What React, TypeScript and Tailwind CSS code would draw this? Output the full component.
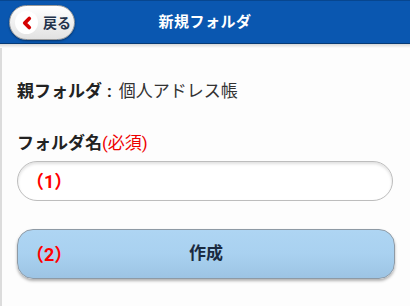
import { ChevronLeft } from "lucide-react"

const font = { fontFamily: '"Roboto", "Noto Sans CJK JP", sans-serif' }

export default function App() {
  return (
    <div className="w-[410px] h-[306px] overflow-hidden bg-[#fdfdfd]" style={font}>
      <header className="relative h-[44px] bg-[#0a57b0] border-t border-[#07468f] border-b border-b-[#073a75] flex items-center justify-center">
        <button className="absolute left-[9px] top-[4px] h-[35px] w-[66px] rounded-full border border-[#9a9a9a] bg-gradient-to-b from-white to-[#e2e2e2] shadow-[0_1px_2px_rgba(0,0,0,0.4)] flex items-center pl-[5px] gap-[5px]">
          <span className="w-[23px] h-[23px] rounded-full bg-white flex items-center justify-center">
            <ChevronLeft className="w-[18px] h-[18px] text-[#d40000]" strokeWidth={5} />
          </span>
          <span className="text-[14px] font-bold text-[#22324a] leading-none">戻る</span>
        </button>
        <h1 className="text-white text-[15px] font-bold tracking-[0.5px]">新規フォルダ</h1>
      </header>
      <div className="h-[4px] bg-gradient-to-b from-[#d8d8d8] to-[#fdfdfd]" />
      <main className="border-l-2 border-[#dcdcdc] h-[262px] pl-[15px] pr-[15px]">
        <p className="pt-[31px] text-[17px] leading-[24px] text-[#222]">
          <span className="font-bold">親フォルダ</span>
          <span className="font-bold ml-[5px] mr-[7px]">:</span>
          <span className="text-[#333]">個人アドレス帳</span>
        </p>
        <p className="mt-[28px] text-[17px] leading-[24px] font-bold text-[#222]">
          フォルダ名<span className="font-normal text-[#ee0000]">(必須)</span>
        </p>
        <div className="mt-[6px] w-[376px] h-[40px] rounded-[20px] border border-[#bdbdbd] bg-white shadow-[inset_0_2px_3px_rgba(0,0,0,0.12)] flex items-center pl-[8px]">
          <span className="text-[18px] font-bold text-[#ff0000]">（1）</span>
        </div>
        <button className="relative mt-[28px] w-[378px] h-[50px] rounded-[16px] border border-[#8e9aa5] bg-gradient-to-b from-[#aed5f3] via-[#a9d1f0] to-[#9dc4e4] shadow-[0_2px_3px_rgba(0,0,0,0.3)] flex items-center justify-center">
          <span className="absolute left-[8px] text-[18px] font-bold text-[#ff0000]">（2）</span>
          <span className="text-[17px] font-bold text-[#1a2a40]">作成</span>
        </button>
      </main>
    </div>
  )
}
